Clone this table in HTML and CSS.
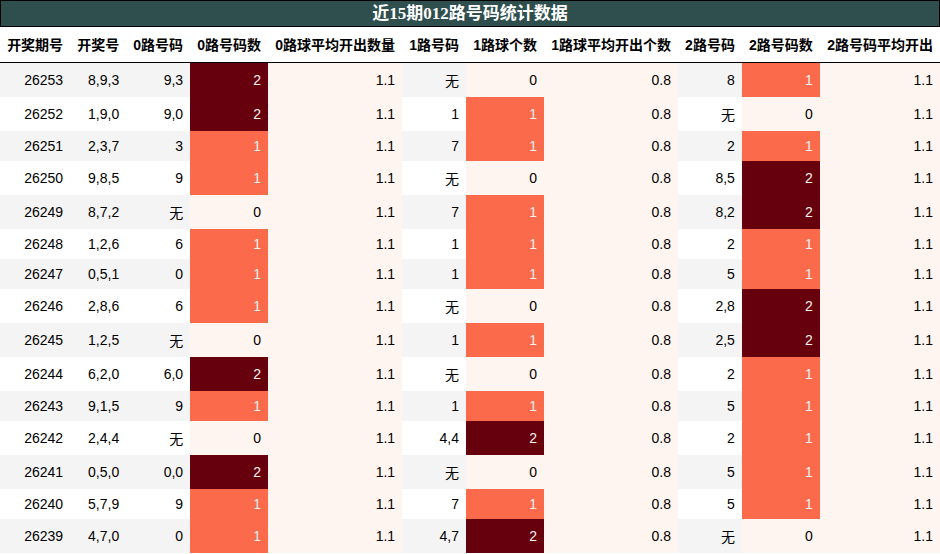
FILE: index.html
```html
<!DOCTYPE html>
<html lang="zh">
<head>
<meta charset="utf-8">
<title>近15期012路号码统计数据</title>
<link rel="stylesheet" href="styles.css">
</head>
<body>
<table class="stats">
<caption class="title">近15期012路号码统计数据</caption>
<thead>
<tr><th>开奖期号</th><th>开奖号</th><th>0路号码</th><th>0路号码数</th><th>0路球平均开出数量</th><th>1路号码</th><th>1路球个数</th><th>1路球平均开出个数</th><th>2路号码</th><th>2路号码数</th><th>2路号码平均开出</th></tr>
</thead>
<tbody>
<tr><td>26253</td><td>8,9,3</td><td>9,3</td><td class="c2">2</td><td class="avg">1.1</td><td>无</td><td class="c0">0</td><td class="avg">0.8</td><td>8</td><td class="c1">1</td><td class="avg">1.1</td></tr>
<tr><td>26252</td><td>1,9,0</td><td>9,0</td><td class="c2">2</td><td class="avg">1.1</td><td>1</td><td class="c1">1</td><td class="avg">0.8</td><td>无</td><td class="c0">0</td><td class="avg">1.1</td></tr>
<tr><td>26251</td><td>2,3,7</td><td>3</td><td class="c1">1</td><td class="avg">1.1</td><td>7</td><td class="c1">1</td><td class="avg">0.8</td><td>2</td><td class="c1">1</td><td class="avg">1.1</td></tr>
<tr><td>26250</td><td>9,8,5</td><td>9</td><td class="c1">1</td><td class="avg">1.1</td><td>无</td><td class="c0">0</td><td class="avg">0.8</td><td>8,5</td><td class="c2">2</td><td class="avg">1.1</td></tr>
<tr><td>26249</td><td>8,7,2</td><td>无</td><td class="c0">0</td><td class="avg">1.1</td><td>7</td><td class="c1">1</td><td class="avg">0.8</td><td>8,2</td><td class="c2">2</td><td class="avg">1.1</td></tr>
<tr><td>26248</td><td>1,2,6</td><td>6</td><td class="c1">1</td><td class="avg">1.1</td><td>1</td><td class="c1">1</td><td class="avg">0.8</td><td>2</td><td class="c1">1</td><td class="avg">1.1</td></tr>
<tr><td>26247</td><td>0,5,1</td><td>0</td><td class="c1">1</td><td class="avg">1.1</td><td>1</td><td class="c1">1</td><td class="avg">0.8</td><td>5</td><td class="c1">1</td><td class="avg">1.1</td></tr>
<tr><td>26246</td><td>2,8,6</td><td>6</td><td class="c1">1</td><td class="avg">1.1</td><td>无</td><td class="c0">0</td><td class="avg">0.8</td><td>2,8</td><td class="c2">2</td><td class="avg">1.1</td></tr>
<tr><td>26245</td><td>1,2,5</td><td>无</td><td class="c0">0</td><td class="avg">1.1</td><td>1</td><td class="c1">1</td><td class="avg">0.8</td><td>2,5</td><td class="c2">2</td><td class="avg">1.1</td></tr>
<tr><td>26244</td><td>6,2,0</td><td>6,0</td><td class="c2">2</td><td class="avg">1.1</td><td>无</td><td class="c0">0</td><td class="avg">0.8</td><td>2</td><td class="c1">1</td><td class="avg">1.1</td></tr>
<tr><td>26243</td><td>9,1,5</td><td>9</td><td class="c1">1</td><td class="avg">1.1</td><td>1</td><td class="c1">1</td><td class="avg">0.8</td><td>5</td><td class="c1">1</td><td class="avg">1.1</td></tr>
<tr><td>26242</td><td>2,4,4</td><td>无</td><td class="c0">0</td><td class="avg">1.1</td><td>4,4</td><td class="c2">2</td><td class="avg">0.8</td><td>2</td><td class="c1">1</td><td class="avg">1.1</td></tr>
<tr><td>26241</td><td>0,5,0</td><td>0,0</td><td class="c2">2</td><td class="avg">1.1</td><td>无</td><td class="c0">0</td><td class="avg">0.8</td><td>5</td><td class="c1">1</td><td class="avg">1.1</td></tr>
<tr><td>26240</td><td>5,7,9</td><td>9</td><td class="c1">1</td><td class="avg">1.1</td><td>7</td><td class="c1">1</td><td class="avg">0.8</td><td>5</td><td class="c1">1</td><td class="avg">1.1</td></tr>
<tr><td>26239</td><td>4,7,0</td><td>0</td><td class="c1">1</td><td class="avg">1.1</td><td>4,7</td><td class="c2">2</td><td class="avg">0.8</td><td>无</td><td class="c0">0</td><td class="avg">1.1</td></tr>
</tbody>
</table>
</body>
</html>
```
FILE: styles.css
```css
html, body {
  margin: 0;
  padding: 0;
  background: #ffffff;
}

.stats {
  width: 100%;
  border-collapse: collapse;
  border-spacing: 0;
  font-family: "Liberation Sans", "Noto Sans CJK SC", sans-serif;
  font-size: 14px;
  color: #000000;
}

.title {
  background: #2f4f4f;
  color: #ffffff;
  border: 1px solid #000000;
  font-family: "Liberation Serif", "Noto Sans CJK SC", serif;
  font-weight: bold;
  font-size: 17px;
  height: 25px;
  line-height: 25px;
  text-align: center;
  white-space: nowrap;
}

.stats th,
.stats td {
  padding: 7px 7px;
  text-align: right;
  white-space: nowrap;
}

.stats th {
  font-weight: bold;
  border-bottom: 1px solid #000000;
  padding-top: 7px;
  padding-bottom: 8px;
}

.stats tbody tr:nth-child(odd) {
  background: #f4f4f4;
}

.stats tbody tr:nth-child(even) {
  background: #ffffff;
}

.stats td.avg,
.stats td.c0 {
  background: #fff5f0;
  color: #000000;
}

.stats td.c1 {
  background: #fb6a4a;
  color: #f1f1f1;
}

.stats td.c2 {
  background: #67000d;
  color: #f1f1f1;
}
```
